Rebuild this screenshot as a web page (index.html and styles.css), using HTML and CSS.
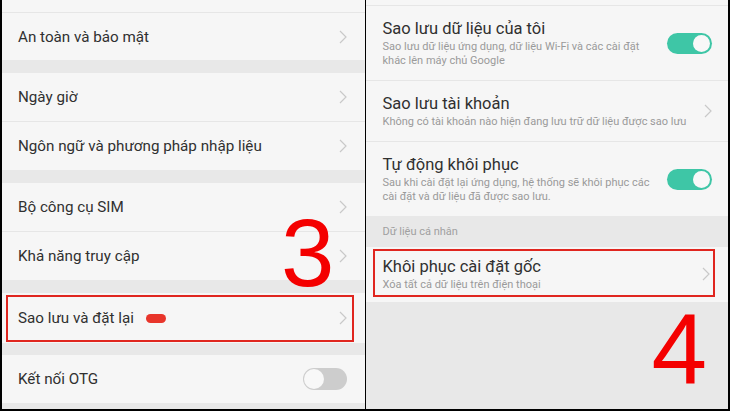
FILE: index.html
```html
<!DOCTYPE html>
<html lang="vi">
<head>
    <meta charset="UTF-8">
    <meta name="viewport" content="width=device-width, initial-scale=1.0">
    <title>Sao lưu và đặt lại</title>
    <link rel="stylesheet" href="styles.css">
</head>
<body>

<div class="shot">

    <!-- === Step 3: Settings list === -->
    <div class="panel">
        <div class="stub stub-left"></div>

        <div class="row row-first">
            <span class="label">An toàn và bảo mật</span>
            <svg class="chevron" viewBox="0 0 8 14"><polyline points="1,1 7,7 1,13"/></svg>
        </div>

        <div class="gap"></div>

        <div class="row">
            <span class="label">Ngày giờ</span>
            <svg class="chevron" viewBox="0 0 8 14"><polyline points="1,1 7,7 1,13"/></svg>
        </div>
        <div class="row">
            <span class="label">Ngôn ngữ và phương pháp nhập liệu</span>
            <svg class="chevron" viewBox="0 0 8 14"><polyline points="1,1 7,7 1,13"/></svg>
        </div>

        <div class="gap"></div>

        <div class="row">
            <span class="label">Bộ công cụ SIM</span>
            <svg class="chevron" viewBox="0 0 8 14"><polyline points="1,1 7,7 1,13"/></svg>
        </div>
        <div class="row">
            <span class="label">Khả năng truy cập</span>
            <svg class="chevron" viewBox="0 0 8 14"><polyline points="1,1 7,7 1,13"/></svg>
        </div>

        <div class="gap"></div>

        <div class="row row-tall marked marked-left">
            <span class="label">Sao lưu và đặt lại</span>
            <span class="badge"></span>
            <svg class="chevron" viewBox="0 0 8 14"><polyline points="1,1 7,7 1,13"/></svg>
        </div>

        <div class="gap gap-short"></div>

        <div class="row">
            <span class="label">Kết nối OTG</span>
            <span class="toggle"><span class="knob"></span></span>
        </div>

        <div class="gap gap-fill"></div>

        <span class="step step-3">3</span>
    </div>

    <!-- === Step 4: Backup & reset screen === -->
    <div class="panel">
        <div class="stub stub-right"></div>

        <div class="item">
            <div class="item-text">
                <div class="title">Sao lưu dữ liệu của tôi</div>
                <div class="sub">Sao lưu dữ liệu ứng dụng, dữ liệu Wi-Fi và các cài đặt<br>khác lên máy chủ Google</div>
            </div>
            <span class="toggle toggle-on"><span class="knob"></span></span>
        </div>

        <div class="item">
            <div class="item-text">
                <div class="title">Sao lưu tài khoản</div>
                <div class="sub">Không có tài khoản nào hiện đang lưu trữ dữ liệu được sao lưu</div>
            </div>
            <svg class="chevron" viewBox="0 0 8 14"><polyline points="1,1 7,7 1,13"/></svg>
        </div>

        <div class="item item-last">
            <div class="item-text">
                <div class="title">Tự động khôi phục</div>
                <div class="sub">Sau khi cài đặt lại ứng dụng, hệ thống sẽ khôi phục các<br>cài đặt và dữ liệu đã được sao lưu.</div>
            </div>
            <span class="toggle toggle-on"><span class="knob"></span></span>
        </div>

        <div class="section">Dữ liệu cá nhân</div>

        <div class="item item-reset marked marked-right">
            <div class="item-text">
                <div class="title">Khôi phục cài đặt gốc</div>
                <div class="sub">Xóa tất cả dữ liệu trên điện thoại</div>
            </div>
            <svg class="chevron" viewBox="0 0 8 14"><polyline points="1,1 7,7 1,13"/></svg>
        </div>

        <div class="gap gap-fill"></div>

        <span class="step step-4">4</span>
    </div>

</div>

</body>
</html>
```

FILE: styles.css
```css
/* === Page === */
html, body {
    margin: 0;
    padding: 0;
}

body {
    background-color: #000;
    font-family: Roboto, "Noto Sans", sans-serif;
    color: #303030;
}

.shot {
    display: flex;
    gap: 1px;
    width: 730px;
    height: 411px;
    padding: 0 2px 2px 2px;
    box-sizing: border-box;
}

.panel {
    position: relative;
    flex: 1;
    display: flex;
    flex-direction: column;
    background-color: #e8e8e8;
    overflow: hidden;
}

/* === Left list === */
.stub {
    background-color: #f6f6f6;
    border-bottom: 1px solid #e6e6e6;
    flex: none;
}

.stub-left {
    height: 12px;
}

.stub-right {
    height: 5px;
}

.row {
    display: flex;
    align-items: center;
    height: 48px;
    padding: 0 18px 0 16px;
    background-color: #f6f6f6;
    border-top: 1px solid #e6e6e6;
    flex: none;
}

.row-first {
    height: 47px;
    border-top: none;
}

.gap + .row {
    border-top: none;
}

.row-tall {
    height: 50px;
}

.label {
    font-size: 15.2px;
}

.badge {
    width: 20px;
    height: 9px;
    margin-left: 12px;
    border-radius: 5px;
    background-color: #e8352b;
}

.gap {
    height: 13px;
    flex: none;
}

.gap-short {
    height: 12px;
}

.gap-fill {
    flex: 1;
}

.chevron {
    width: 8px;
    height: 14px;
    margin-left: auto;
    flex: none;
    fill: none;
    stroke: #c9c9c9;
    stroke-width: 1.2;
}

/* === Switches === */
.toggle {
    position: relative;
    width: 44px;
    height: 22px;
    margin-left: auto;
    border-radius: 11px;
    background-color: #cdcdcd;
    flex: none;
}

.toggle .knob {
    position: absolute;
    top: 1px;
    left: 1px;
    width: 20px;
    height: 20px;
    border-radius: 50%;
    background-color: #f8f8f8;
}

.toggle-on {
    width: 45px;
    height: 21px;
    background-color: #3ec6a6;
}

.toggle-on .knob {
    top: 2px;
    left: auto;
    right: 2px;
    width: 17px;
    height: 17px;
}

/* === Right screen === */
.item {
    display: flex;
    align-items: center;
    padding: 12px 16px 12px 17px;
    background-color: #f6f6f6;
    border-bottom: 1px solid #e6e6e6;
    flex: none;
}

.item-last {
    border-bottom: none;
}

.item-reset {
    padding: 9px 18px 10px 17px;
    border-bottom: none;
}

.item-text {
    flex: 1;
}

.title {
    font-size: 16.5px;
    line-height: 22px;
}

.sub {
    font-size: 11px;
    line-height: 14px;
    color: #9a9a9a;
}

.section {
    padding: 8px 17px;
    font-size: 11px;
    line-height: 15px;
    color: #a0a0a0;
    flex: none;
}

/* === Annotations === */
.marked {
    position: relative;
}

.marked::after {
    content: "";
    position: absolute;
    border: 2px solid #e0261f;
}

.marked-left::after {
    inset: 2px 11px 1px 4px;
}

.marked-right::after {
    inset: 2px 13px 5px 7px;
}

.step {
    position: absolute;
    font-family: "Liberation Sans", Arial, sans-serif;
    font-size: 96px;
    line-height: 1;
    color: #f40000;
}

.step-3 {
    left: 279px;
    top: 205px;
}

.step-4 {
    font-size: 100px;
    left: 286px;
    top: 299px;
}
```
